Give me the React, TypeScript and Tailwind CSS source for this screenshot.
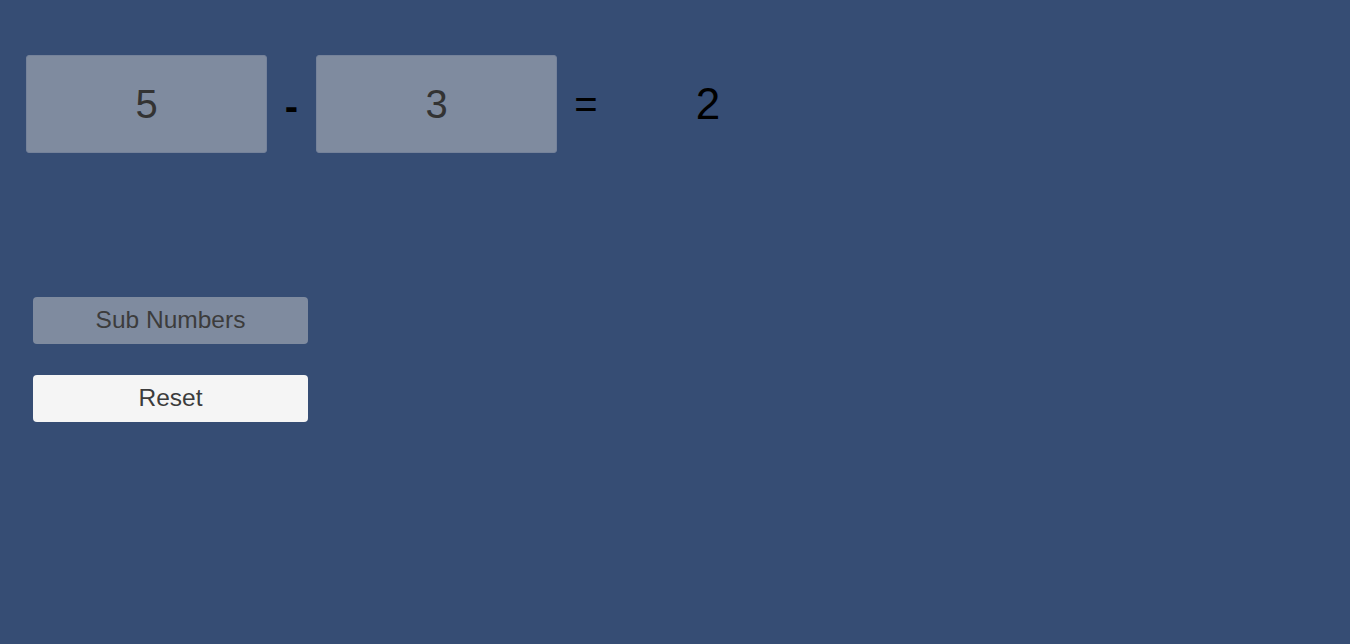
import React, { useState } from "react";

const font = { fontFamily: '"Liberation Sans", Arial, sans-serif' };

export default function App() {
  const [a, setA] = useState("5");
  const [b, setB] = useState("3");
  const [result, setResult] = useState("2");

  const sub = () => setResult(String(Number(a) - Number(b)));
  const reset = () => {
    setA("");
    setB("");
    setResult("");
  };

  return (
    <div className="min-h-[644px] w-full bg-[#364d74] pt-[55px] pl-[26px]" style={font}>
      {/* equation row */}
      <div className="flex items-center h-[98px]">
        <input
          className="w-[241px] h-[98px] rounded-[3px] border border-[#75829a] bg-[#7f8b9f] text-center text-[40px] text-[#333333] outline-none"
          value={a}
          onChange={(e) => setA(e.currentTarget.value)}
        />
        <span className="w-[49px] text-center text-[40px] font-bold text-black leading-none pt-[4px]">-</span>
        <input
          className="w-[241px] h-[98px] rounded-[3px] border border-[#75829a] bg-[#7f8b9f] text-center text-[40px] text-[#333333] outline-none"
          value={b}
          onChange={(e) => setB(e.currentTarget.value)}
        />
        <span className="w-[58px] text-center text-[40px] text-black leading-none">=</span>
        <span className="w-[186px] text-center text-[44px] text-black leading-none">{result}</span>
      </div>

      {/* buttons */}
      <div className="flex flex-col gap-[31px] mt-[144px] ml-[7px] w-[275px]">
        <button
          className="h-[47px] rounded-[4px] bg-[#7f8b9f] text-[24.5px] text-[#3c3c3c]"
          onClick={sub}
        >
          Sub Numbers
        </button>
        <button
          className="h-[47px] rounded-[4px] bg-[#f5f5f5] text-[24.5px] text-[#3c3c3c]"
          onClick={reset}
        >
          Reset
        </button>
      </div>
    </div>
  );
}
